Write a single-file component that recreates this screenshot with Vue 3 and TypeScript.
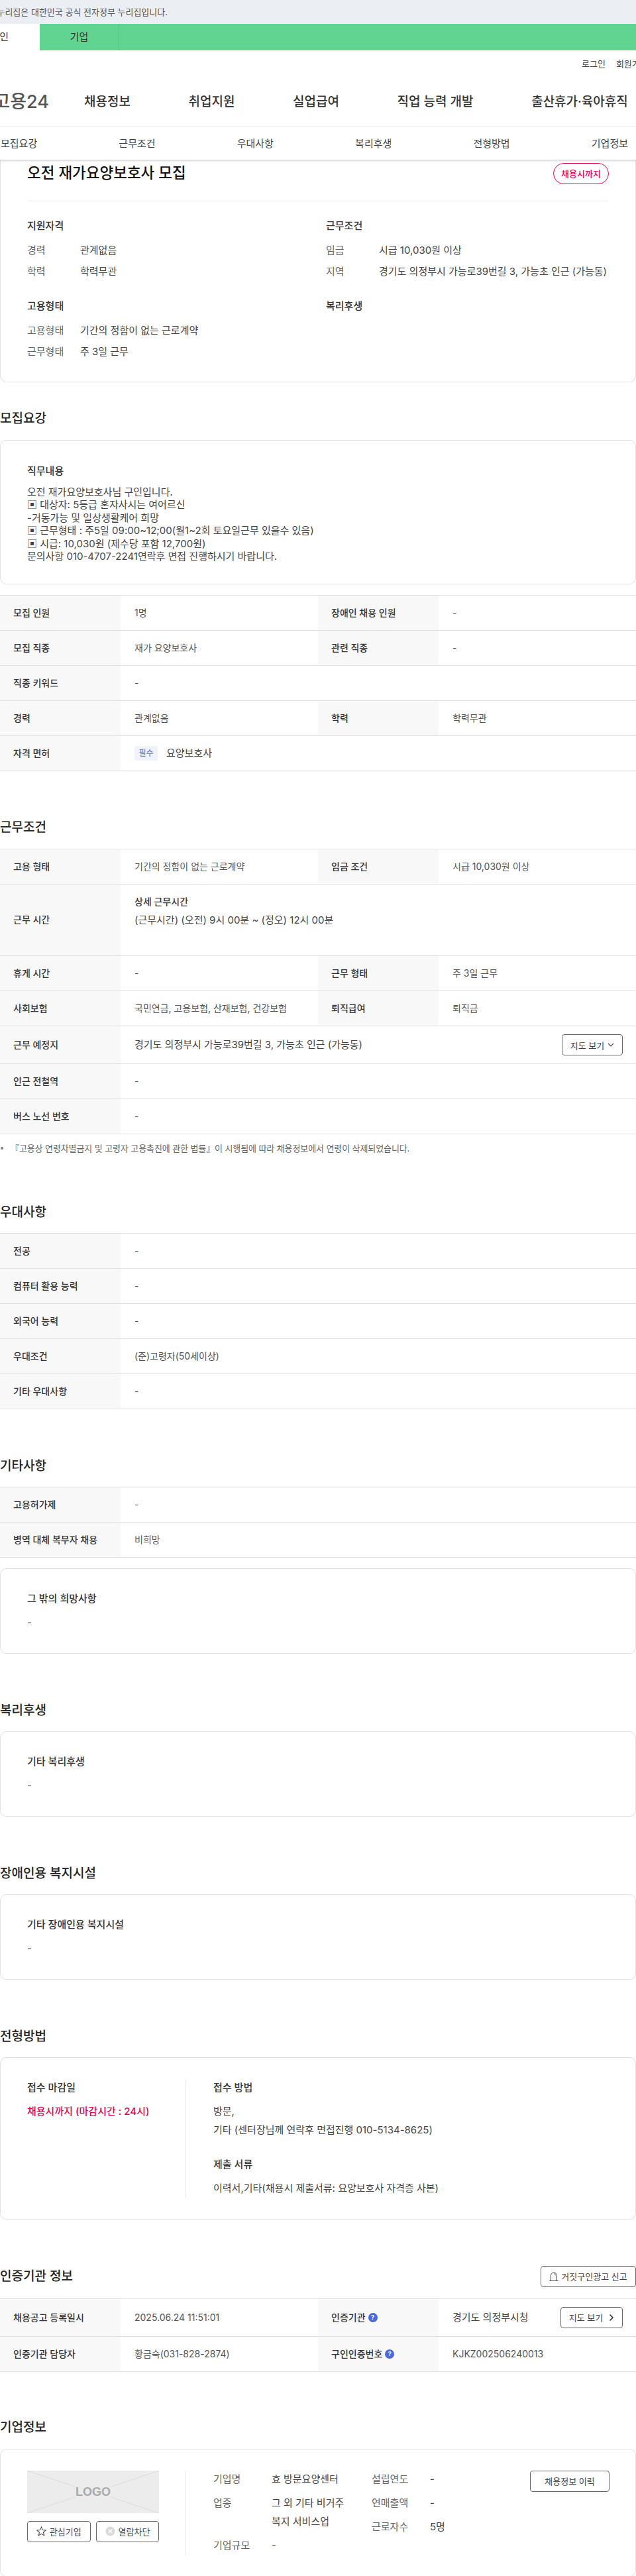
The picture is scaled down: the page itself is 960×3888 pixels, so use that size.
<script setup lang="ts">
interface Row {
  k1: string
  v1: string
  k2?: string
  v2?: string
}

const navItems = ['채용정보', '취업지원', '실업급여', '직업 능력 개발', '출산휴가·육아휴직']
const subTabs = ['모집요강', '근무조건', '우대사항', '복리후생', '전형방법', '기업정보']

const jobLines = [
  '오전 재가요양보호사님 구인입니다.',
  '▣ 대상자: 5등급 혼자사시는 여어르신',
  '-거동가능 및 일상생활케어 희망',
  '▣ 근무형태 : 주5일 09:00~12;00(월1~2회 토요일근무 있을수 있음)',
  '▣ 시급: 10,030원 (제수당 포함 12,700원)',
  '문의사항 010-4707-2241연락후 면접 진행하시기 바랍니다.'
]

const recruitRows: Row[] = [
  { k1: '모집 인원', v1: '1명', k2: '장애인 채용 인원', v2: '-' },
  { k1: '모집 직종', v1: '재가 요양보호사', k2: '관련 직종', v2: '-' },
  { k1: '직종 키워드', v1: '-' },
  { k1: '경력', v1: '관계없음', k2: '학력', v2: '학력무관' }
]

const conditionRows: Row[] = [
  { k1: '휴게 시간', v1: '-', k2: '근무 형태', v2: '주 3일 근무' },
  { k1: '사회보험', v1: '국민연금, 고용보험, 산재보험, 건강보험', k2: '퇴직급여', v2: '퇴직금' }
]

const transitRows: Row[] = [
  { k1: '인근 전철역', v1: '-' },
  { k1: '버스 노선 번호', v1: '-' }
]

const preferRows: Row[] = [
  { k1: '전공', v1: '-' },
  { k1: '컴퓨터 활용 능력', v1: '-' },
  { k1: '외국어 능력', v1: '-' },
  { k1: '우대조건', v1: '(준)고령자(50세이상)' },
  { k1: '기타 우대사항', v1: '-' }
]

const etcRows: Row[] = [
  { k1: '고용허가제', v1: '-' },
  { k1: '병역 대체 복무자 채용', v1: '비희망' }
]
</script>

<template>
  <div class="page">
    <div class="gov-bar">
      <div class="gov-text"><span>이 누리집은 대한민국 공식 전자정부 누리집입니다.</span></div>
    </div>

    <div class="user-tabs">
      <div class="user-tab on"><span>개인</span></div>
      <div class="user-tab">기업</div>
    </div>

    <div class="util">
      <span>로그인</span>
      <span>회원가입</span>
    </div>

    <div class="gnb">
      <div class="logo"><span>고용24</span></div>
      <div class="gnb-menu">
        <span v-for="item in navItems" :key="item">{{ item }}</span>
      </div>
    </div>

    <div class="sub-tabs">
      <span v-for="tab in subTabs" :key="tab">{{ tab }}</span>
    </div>

    <!-- 공고 요약 -->
    <div class="card summary">
      <div class="summary-head">
        <h1>오전 재가요양보호사 모집</h1>
        <span class="badge">채용시까지</span>
      </div>
      <div class="summary-grid">
        <div class="group">
          <h3>지원자격</h3>
          <div class="pair"><span>경력</span><span>관계없음</span></div>
          <div class="pair"><span>학력</span><span>학력무관</span></div>
        </div>
        <div class="group">
          <h3>근무조건</h3>
          <div class="pair"><span>임금</span><span>시급 10,030원 이상</span></div>
          <div class="pair"><span>지역</span><span>경기도 의정부시 가능로39번길 3, 가능초 인근 (가능동)</span></div>
        </div>
        <div class="group">
          <h3>고용형태</h3>
          <div class="pair"><span>고용형태</span><span>기간의 정함이 없는 근로계약</span></div>
          <div class="pair"><span>근무형태</span><span>주 3일 근무</span></div>
        </div>
        <div class="group">
          <h3>복리후생</h3>
        </div>
      </div>
    </div>

    <section class="first">
      <h2>모집요강</h2>
      <div class="card job">
        <h3>직무내용</h3>
        <div class="job-text">
          <div v-for="line in jobLines" :key="line">{{ line }}</div>
        </div>
      </div>
      <div class="table job-table">
        <div v-for="row in recruitRows" :key="row.k1" class="row">
          <div class="th">{{ row.k1 }}</div>
          <div class="td" :class="{ wide: !row.k2 }">{{ row.v1 }}</div>
          <template v-if="row.k2">
            <div class="th">{{ row.k2 }}</div>
            <div class="td">{{ row.v2 }}</div>
          </template>
        </div>
        <div class="row">
          <div class="th">자격 면허</div>
          <div class="td wide">
            <span class="chip">필수</span>
            <span class="chip-text">요양보호사</span>
          </div>
        </div>
      </div>
    </section>

    <section>
      <h2>근무조건</h2>
      <div class="table">
        <div class="row">
          <div class="th">고용 형태</div>
          <div class="td">기간의 정함이 없는 근로계약</div>
          <div class="th">임금 조건</div>
          <div class="td">시급 10,030원 이상</div>
        </div>
        <div class="row tall">
          <div class="th">근무 시간</div>
          <div class="td wide hours">
            <strong>상세 근무시간</strong>
            <span>(근무시간) (오전) 9시 00분 ~ (정오) 12시 00분</span>
          </div>
        </div>
        <div v-for="row in conditionRows" :key="row.k1" class="row">
          <div class="th">{{ row.k1 }}</div>
          <div class="td">{{ row.v1 }}</div>
          <div class="th">{{ row.k2 }}</div>
          <div class="td">{{ row.v2 }}</div>
        </div>
        <div class="row with-btn">
          <div class="th">근무 예정지</div>
          <div class="td wide spread">
            <span class="addr">경기도 의정부시 가능로39번길 3, 가능초 인근 (가능동)</span>
            <button class="btn map-btn" type="button">
              지도 보기
              <svg width="10" height="6" viewBox="0 0 10 6"><polyline points="1,1 5,5 9,1" fill="none" stroke="#444" stroke-width="1.1" /></svg>
            </button>
          </div>
        </div>
        <div v-for="row in transitRows" :key="row.k1" class="row">
          <div class="th">{{ row.k1 }}</div>
          <div class="td wide">{{ row.v1 }}</div>
        </div>
      </div>
      <p class="note">『고용상 연령차별금지 및 고령자 고용촉진에 관한 법률』이 시행됨에 따라 채용정보에서 연령이 삭제되었습니다.</p>
    </section>

    <section class="after-note">
      <h2>우대사항</h2>
      <div class="table">
        <div v-for="row in preferRows" :key="row.k1" class="row">
          <div class="th">{{ row.k1 }}</div>
          <div class="td wide">{{ row.v1 }}</div>
        </div>
      </div>
    </section>

    <section>
      <h2>기타사항</h2>
      <div class="table">
        <div v-for="row in etcRows" :key="row.k1" class="row">
          <div class="th">{{ row.k1 }}</div>
          <div class="td wide">{{ row.v1 }}</div>
        </div>
      </div>
      <div class="card short etc-card">
        <h3>그 밖의 희망사항</h3>
        <p>-</p>
      </div>
    </section>

    <section>
      <h2>복리후생</h2>
      <div class="card short">
        <h3>기타 복리후생</h3>
        <p>-</p>
      </div>
    </section>

    <section>
      <h2>장애인용 복지시설</h2>
      <div class="card short">
        <h3>기타 장애인용 복지시설</h3>
        <p>-</p>
      </div>
    </section>

    <section>
      <h2>전형방법</h2>
      <div class="card method">
        <div class="method-left">
          <h3>접수 마감일</h3>
          <p class="deadline">채용시까지 (마감시간 : 24시)</p>
        </div>
        <div class="method-right">
          <h3>접수 방법</h3>
          <p class="multi">방문,<br />기타 (센터장님께 연락후 면접진행 010-5134-8625)</p>
          <h3 class="docs">제출 서류</h3>
          <p>이력서,기타(채용시 제출서류: 요양보호사 자격증 사본)</p>
        </div>
      </div>
    </section>

    <section>
      <div class="head-line">
        <h2>인증기관 정보</h2>
        <button class="btn report-btn" type="button">
          <svg width="14" height="16" viewBox="0 0 14 16">
            <path d="M2.5 14V6.5a4.5 4.5 0 0 1 9 0V14" fill="none" stroke="#444" stroke-width="1" />
            <path d="M7 3.5a3 3 0 0 1 2.6 2.6" fill="none" stroke="#444" stroke-width="0.8" />
            <line x1="0.5" y1="14.5" x2="13.5" y2="14.5" stroke="#444" stroke-width="1" />
          </svg>
          거짓구인광고 신고
        </button>
      </div>
      <div class="table">
        <div class="row with-btn">
          <div class="th">채용공고 등록일시</div>
          <div class="td">2025.06.24 11:51:01</div>
          <div class="th">인증기관 <i class="help">?</i></div>
          <div class="td spread">
            <span class="agency">경기도 의정부시청</span>
            <button class="btn agency-btn" type="button">
              지도 보기
              <svg width="8" height="12" viewBox="0 0 8 12"><polyline points="1.5,1.5 6,6 1.5,10.5" fill="none" stroke="#333" stroke-width="1.6" /></svg>
            </button>
          </div>
        </div>
        <div class="row">
          <div class="th">인증기관 담당자</div>
          <div class="td">황금숙(031-828-2874)</div>
          <div class="th">구인인증번호 <i class="help">?</i></div>
          <div class="td">KJKZ002506240013</div>
        </div>
      </div>
    </section>

    <section class="last">
      <h2>기업정보</h2>
      <div class="card company">
        <div class="company-left">
          <svg class="logo-box" width="199" height="64" viewBox="0 0 199 64">
            <rect width="199" height="64" fill="#ececec" />
            <g stroke="#dcdcdc" stroke-width="1">
              <line x1="0" y1="0" x2="72" y2="24" />
              <line x1="199" y1="0" x2="127" y2="24" />
              <line x1="0" y1="64" x2="72" y2="40" />
              <line x1="199" y1="64" x2="127" y2="40" />
            </g>
            <text x="99.5" y="38" text-anchor="middle" class="logo-word">LOGO</text>
          </svg>
          <div class="company-btns">
            <button class="btn" type="button">
              <svg width="15" height="15" viewBox="0 0 16 16"><polygon points="8,1.2 10,6 15.2,6.4 11.2,9.8 12.5,14.8 8,12.1 3.5,14.8 4.8,9.8 0.8,6.4 6,6" fill="none" stroke="#444" stroke-width="1.1" /></svg>
              관심기업
            </button>
            <button class="btn" type="button">
              <svg width="15" height="15" viewBox="0 0 16 16">
                <circle cx="8" cy="8" r="7.5" fill="#d9d9d9" />
                <path d="M5 5l6 6M11 5l-6 6" stroke="#fff" stroke-width="1.4" />
              </svg>
              열람차단
            </button>
          </div>
        </div>
        <div class="company-info">
          <div class="info-col">
            <div class="info"><span>기업명</span><span>효 방문요양센터</span></div>
            <div class="info"><span>업종</span><span>그 외 기타 비거주 복지 서비스업</span></div>
            <div class="info"><span>기업규모</span><span>-</span></div>
          </div>
          <div class="info-col">
            <div class="info"><span>설립연도</span><span>-</span></div>
            <div class="info"><span>연매출액</span><span>-</span></div>
            <div class="info"><span>근로자수</span><span>5명</span></div>
          </div>
          <button class="btn history-btn" type="button">채용정보 이력</button>
        </div>
      </div>
    </section>
  </div>
</template>

<style scoped>
.page {
  width: 960px;
  height: 3888px;
  overflow: hidden;
  background: #fff;
  color: #333;
  font-family: "Inter", "Noto Sans CJK KR", sans-serif;
  font-size: 15px;
  line-height: 20px;
}

h1, h2, h3, p {
  margin: 0;
}

.gov-bar {
  height: 36px;
  background: #ebeff4;
}

.gov-text {
  width: 253px;
  height: 36px;
  display: flex;
  justify-content: flex-end;
  align-items: center;
  white-space: nowrap;
  font-size: 13px;
  color: #555;
}

.gov-text span {
  flex: none;
}

.user-tabs {
  display: flex;
  height: 40px;
  background: #61d491;
  font-size: 15px;
  color: #333;
}

.user-tab {
  width: 119px;
  display: flex;
  align-items: center;
  justify-content: center;
  border-right: 1px solid #57c886;
}

.user-tab.on {
  width: 60px;
  justify-content: flex-end;
  padding-right: 47px;
  box-sizing: border-box;
  background: #fff;
  border-right: 0;
  white-space: nowrap;
}

.user-tab.on span {
  flex: none;
}

.util {
  height: 40px;
  display: flex;
  align-items: center;
  gap: 16px;
  margin-left: 878px;
  font-size: 13px;
  color: #444;
  white-space: nowrap;
}

.gnb {
  height: 76px;
  display: flex;
  align-items: center;
  border-bottom: 1px solid #e8e8e8;
  box-sizing: border-box;
  white-space: nowrap;
}

.logo {
  width: 74px;
  display: flex;
  justify-content: flex-end;
  font-size: 27px;
  font-weight: 500;
  color: #555;
  flex: none;
}

.logo span {
  flex: none;
}

.gnb-menu {
  margin-left: 53px;
  display: flex;
  gap: 87.6px;
  font-size: 19px;
  font-weight: 500;
  color: #333;
}

.sub-tabs {
  height: 49px;
  padding: 0 12px 0 1px;
  display: flex;
  align-items: center;
  justify-content: space-between;
  box-shadow: 0 2px 3px rgba(0, 0, 0, 0.16);
  position: relative;
  z-index: 1;
  font-size: 15px;
  color: #444;
}

.card {
  border: 1px solid #e0e0e0;
  border-radius: 10px;
  box-sizing: border-box;
}

.summary {
  border-top: 0;
  border-top-left-radius: 0;
  border-top-right-radius: 0;
  height: 336px;
  padding: 5px 40px 0;
}

.summary-head {
  display: flex;
  justify-content: space-between;
  align-items: center;
  height: 32px;
  padding-bottom: 25px;
  border-bottom: 1px solid #ececec;
  box-sizing: content-box;
}

h1 {
  font-size: 22.5px;
  font-weight: 500;
  color: #111;
  margin-top: -3px;
}

.badge {
  width: 84px;
  height: 32px;
  box-sizing: border-box;
  border: 1px solid #e6004d;
  border-radius: 16px;
  display: flex;
  align-items: center;
  justify-content: center;
  color: #e6004d;
  font-size: 13px;
  font-weight: 500;
}

.summary-grid {
  display: grid;
  grid-template-columns: 451px 1fr;
  row-gap: 19.5px;
  padding-top: 27px;
}

h3 {
  font-size: 15px;
  font-weight: 500;
  color: #333;
}

.group h3 {
  margin-bottom: 17px;
}

.pair {
  display: flex;
  white-space: nowrap;
  margin-bottom: 12px;
  color: #444;
}

.pair span:first-child {
  width: 80px;
  color: #666;
  flex: none;
}

section {
  margin-top: 71.5px;
}

section.first {
  margin-top: 41px;
}

section.after-note {
  margin-top: 72.5px;
}

section.last {
  margin-top: 70.5px;
}

h2 {
  font-size: 19px;
  line-height: 28px;
  font-weight: 500;
  color: #222;
  margin-bottom: 17.5px;
}

.job {
  height: 218px;
  padding: 36px 40px 0;
}

.job-text {
  margin-top: 12px;
  line-height: 19.6px;
  color: #444;
}

.table {
  border-top: 1px solid #e0e0e0;
  font-size: 14px;
  color: #555;
}

.job-table {
  margin-top: 16px;
}

.row {
  display: grid;
  grid-template-columns: 182px 298px 182px 1fr;
  height: 53px;
  border-bottom: 1px solid #e0e0e0;
  box-sizing: border-box;
}

.row.tall {
  height: 108.5px;
}

.row.with-btn {
  height: 57px;
}

.th {
  background: #f8f8f8;
  padding-left: 20px;
  display: flex;
  align-items: center;
  gap: 4px;
  font-weight: 500;
  color: #333;
}

.td {
  padding-left: 21px;
  display: flex;
  align-items: center;
  min-width: 0;
}

.td.wide {
  grid-column: span 3;
}

.chip {
  width: 35px;
  height: 22px;
  border-radius: 3px;
  background: #f0f2fd;
  color: #5b6ee1;
  font-size: 12px;
  display: flex;
  align-items: center;
  justify-content: center;
  margin-right: 13px;
}

.chip-text {
  font-size: 15px;
  color: #444;
}

.hours {
  flex-direction: column;
  align-items: flex-start;
  padding-top: 16px;
  box-sizing: border-box;
  gap: 8px;
}

.hours strong {
  font-weight: 500;
  color: #333;
}

.hours span {
  font-size: 15px;
  color: #444;
}

.spread {
  justify-content: space-between;
  padding-right: 20px;
}

.addr,
.agency {
  font-size: 15px;
  color: #444;
}

.btn {
  height: 32px;
  box-sizing: border-box;
  border: 1px solid #666;
  border-radius: 4px;
  background: #fff;
  font-family: inherit;
  font-size: 13px;
  color: #444;
  display: inline-flex;
  align-items: center;
  justify-content: center;
  gap: 5px;
  padding: 0;
  white-space: nowrap;
}

.map-btn {
  width: 92px;
}

.agency-btn {
  width: 94px;
  gap: 9px;
}

.note {
  margin-top: 11px;
  padding-left: 16px;
  font-size: 13px;
  letter-spacing: -0.1px;
  color: #666;
  position: relative;
  white-space: nowrap;
}

.note::before {
  content: '';
  position: absolute;
  left: 1px;
  top: 8px;
  width: 4px;
  height: 4px;
  border-radius: 50%;
  background: #777;
}

.short {
  height: 129px;
  padding: 35px 40px 0;
}

.short p {
  margin-top: 16px;
  color: #444;
}

.etc-card {
  margin-top: 16px;
}

.method {
  height: 245px;
  padding: 32px 40px 0;
  display: flex;
}

.method-left {
  width: 239px;
  flex: none;
  padding-top: 3px;
  box-sizing: border-box;
}

.method-left p,
.method-right > p {
  margin-top: 16px;
}

.deadline {
  color: #e6004d;
  font-weight: 500;
}

.method-right {
  border-left: 1px solid #e8e8e8;
  padding: 3px 0 5px 41px;
  height: 180px;
  box-sizing: border-box;
  color: #444;
  flex: 1;
}

.method-right > p.multi {
  margin-top: 12px;
  line-height: 28px;
}

.docs {
  margin-top: 28px;
}

.head-line {
  display: flex;
  justify-content: space-between;
  align-items: center;
  height: 28px;
  margin-bottom: 19px;
}

.head-line h2 {
  margin-bottom: 0;
}

.report-btn {
  width: 144px;
  gap: 4px;
}

.help {
  width: 14px;
  height: 14px;
  border-radius: 50%;
  background: #4a68e0;
  color: #fff;
  font-size: 9px;
  line-height: 14px;
  font-style: normal;
  font-weight: 700;
  text-align: center;
  flex: none;
}

.company {
  height: 193px;
  padding: 32px 40px 0;
  display: flex;
}

.company-left {
  width: 199px;
  flex: none;
}

.logo-box {
  display: block;
}

.logo-word {
  font-family: "Liberation Sans", sans-serif;
  font-size: 18px;
  font-weight: 700;
  fill: #aaa;
}

.company-btns {
  margin-top: 12px;
  display: grid;
  grid-template-columns: 95.5px 95px;
  gap: 8.5px;
}

.company-info {
  margin-left: 40px;
  padding-left: 41px;
  border-left: 1px solid #e8e8e8;
  height: 128px;
  flex: 1;
  display: flex;
  align-items: flex-start;
  color: #444;
}

.info-col {
  width: 239px;
  flex: none;
  margin-top: -1px;
}

.info {
  display: flex;
  line-height: 28px;
  margin-bottom: 8px;
  word-break: keep-all;
}

.info span:first-child {
  width: 88px;
  color: #666;
  flex: none;
}

.info span:last-child {
  width: 125px;
}

.history-btn {
  width: 120px;
}
</style>

<style>
body {
  margin: 0;
}
</style>
